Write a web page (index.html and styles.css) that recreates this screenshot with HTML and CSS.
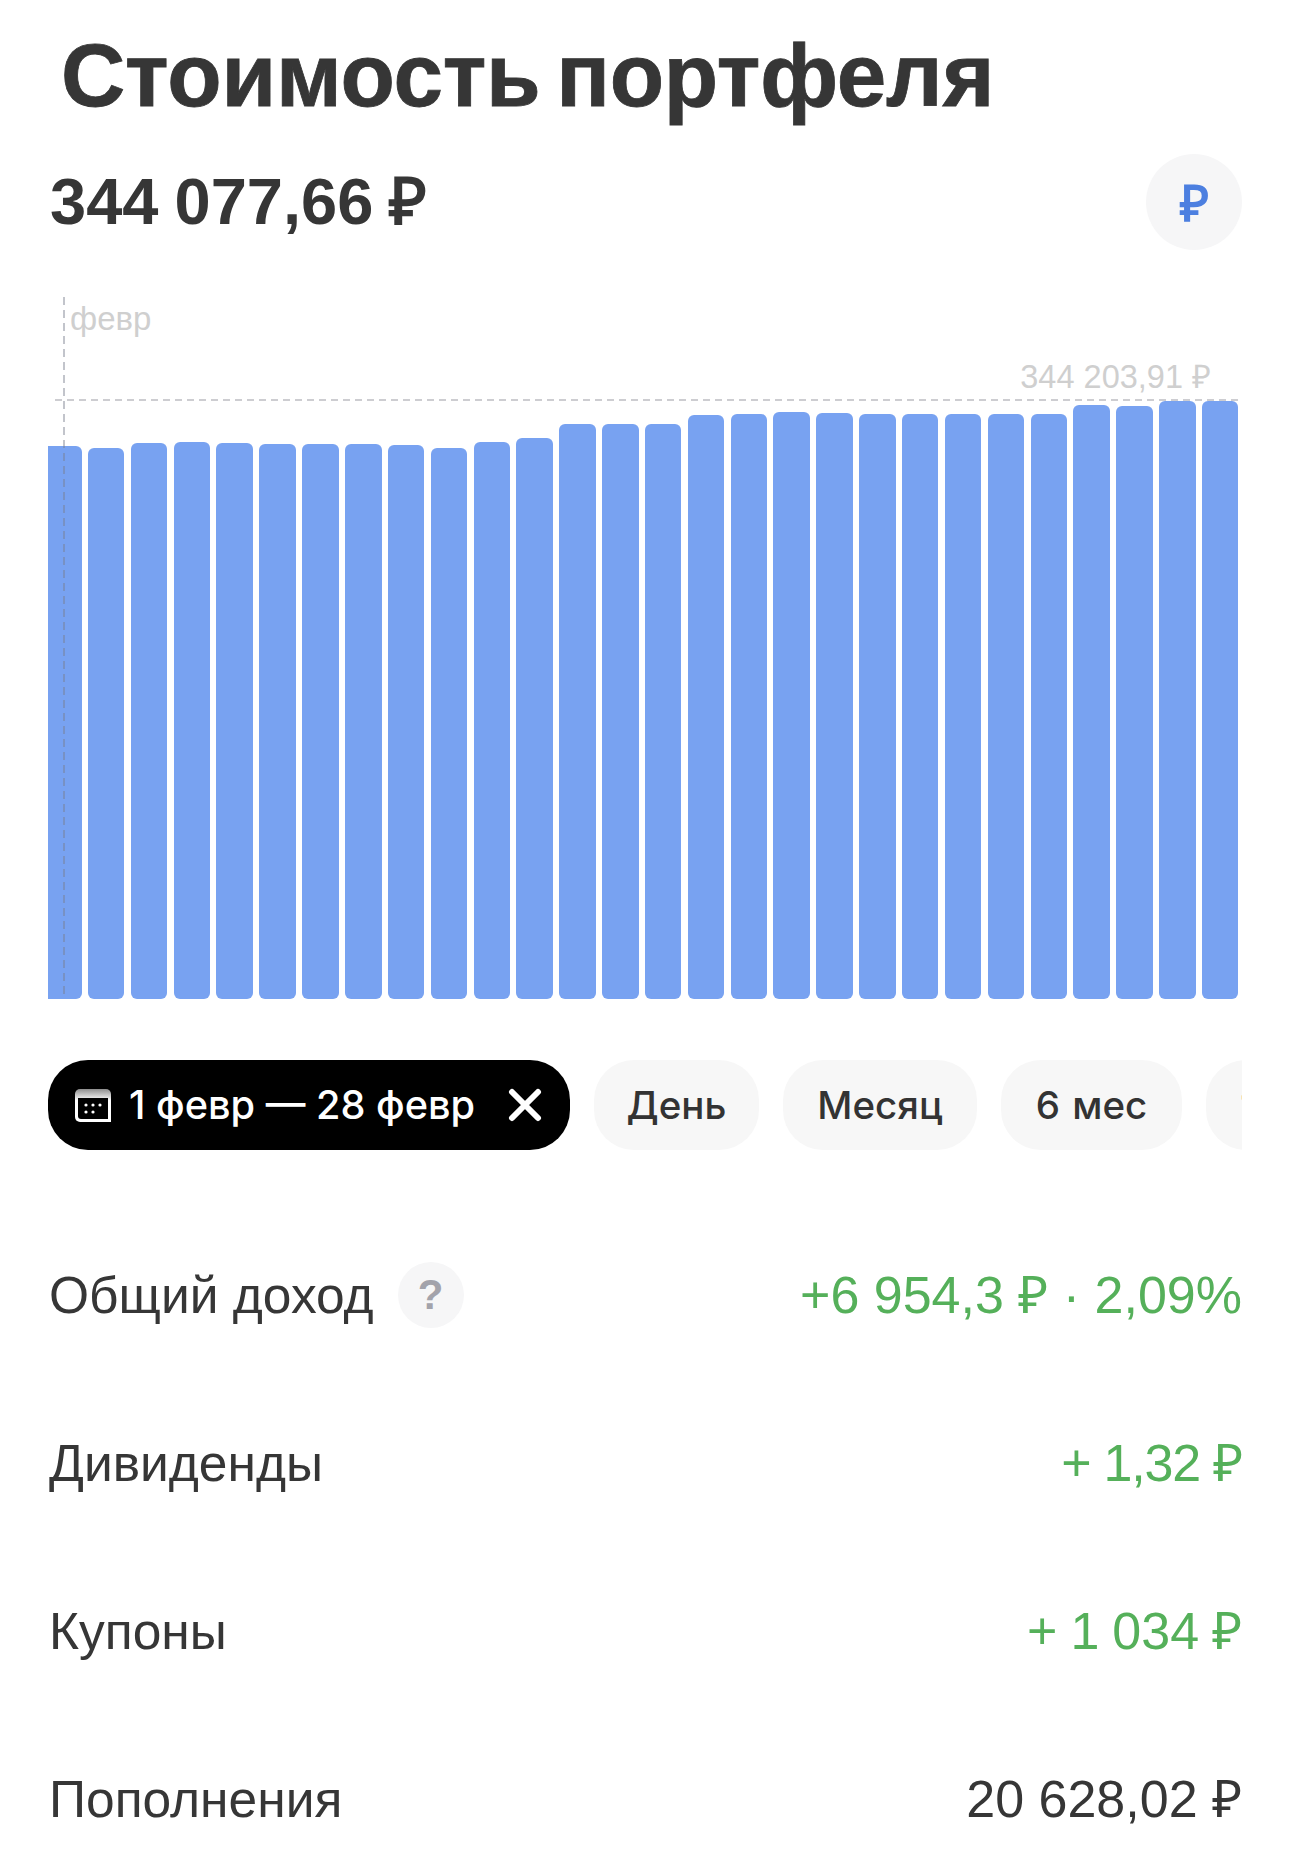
FILE: index.html
```html
<!DOCTYPE html>
<html lang="ru">
<head>
<meta charset="utf-8">
<title>Стоимость портфеля</title>
<link rel="stylesheet" href="styles.css">
</head>
<body>
<main class="page">
  <h1 class="title">Стоимость портфеля</h1>
  <div class="summary">
    <div class="amount">344 077,66 ₽</div>
    <button class="currency">₽</button>
  </div>
  <section class="chart">
    <span class="vline"></span>
    <span class="hline"></span>
    <span class="month">февр</span>
    <span class="maxval">344 203,91 ₽</span>
    <div class="bars">
      <i class="bar first" style="height:553px"></i>
      <i class="bar" style="height:551px"></i>
      <i class="bar" style="height:556px"></i>
      <i class="bar" style="height:557px"></i>
      <i class="bar" style="height:556px"></i>
      <i class="bar" style="height:555px"></i>
      <i class="bar" style="height:555px"></i>
      <i class="bar" style="height:555px"></i>
      <i class="bar" style="height:554px"></i>
      <i class="bar" style="height:551px"></i>
      <i class="bar" style="height:557px"></i>
      <i class="bar" style="height:561px"></i>
      <i class="bar" style="height:575px"></i>
      <i class="bar" style="height:575px"></i>
      <i class="bar" style="height:575px"></i>
      <i class="bar" style="height:584px"></i>
      <i class="bar" style="height:585px"></i>
      <i class="bar" style="height:587px"></i>
      <i class="bar" style="height:586px"></i>
      <i class="bar" style="height:585px"></i>
      <i class="bar" style="height:585px"></i>
      <i class="bar" style="height:585px"></i>
      <i class="bar" style="height:585px"></i>
      <i class="bar" style="height:585px"></i>
      <i class="bar" style="height:594px"></i>
      <i class="bar" style="height:593px"></i>
      <i class="bar" style="height:598px"></i>
      <i class="bar" style="height:598px"></i>
    </div>
  </section>
  <div class="filters">
    <div class="pill active">
      <svg class="cal" viewBox="0 0 38 36" aria-hidden="true">
        <defs><linearGradient id="calTop" x1="0" y1="0" x2="0" y2="1"><stop offset="0" stop-color="#8d8d8d"/><stop offset=".35" stop-color="#fff"/></linearGradient></defs>
        <path d="M1 7a5 5 0 0 1 5-5h26a5 5 0 0 1 5 5v28H6a5 5 0 0 1-5-5z" fill="url(#calTop)"/>
        <path d="M4 11h30v21H7a3 3 0 0 1-3-3z" fill="#000"/>
        <g fill="#fff"><circle cx="12" cy="18" r="1.6"/><circle cx="19" cy="18" r="1.6"/><circle cx="26" cy="18" r="1.6"/><circle cx="12" cy="25" r="1.6"/><circle cx="19" cy="25" r="1.6"/></g>
      </svg>
      <span class="pill-text">1 февр — 28 февр</span>
      <svg class="close" viewBox="0 0 34 34" aria-hidden="true"><path d="M4 4l26 26M30 4L4 30" stroke="#fff" stroke-width="6" stroke-linecap="round" fill="none"/></svg>
    </div>
    <div class="pill day">День</div>
    <div class="pill">Месяц</div>
    <div class="pill">6 мес</div>
    <div class="pill">1 год</div>
  </div>
  <dl class="rows">
    <div class="row">
      <dt class="label">Общий доход <span class="hint">?</span></dt>
      <dd class="value green">+6 954,3 ₽ · 2,09%</dd>
    </div>
    <div class="row">
      <dt class="label">Дивиденды</dt>
      <dd class="value green tight">+ 1,32 ₽</dd>
    </div>
    <div class="row">
      <dt class="label">Купоны</dt>
      <dd class="value green narrow">+ 1 034 ₽</dd>
    </div>
    <div class="row">
      <dt class="label">Пополнения</dt>
      <dd class="value">20 628,02 ₽</dd>
    </div>
  </dl>
</main>
</body>
</html>
```
FILE: styles.css
```css
* { box-sizing: border-box; }
html, body { margin: 0; padding: 0; background: #fff; }
body { height: 1876px; overflow: hidden; font-family: "Liberation Sans", Arial, sans-serif; color: #333; }
.page { padding: 19px 48px 0; width: 1290px; }
.title { margin: 0 0 0 13px; font-size: 89px; line-height: 112px; font-weight: 700; letter-spacing: -.2px; word-spacing: -9px; color: #363636; white-space: nowrap; -webkit-text-stroke: .8px #363636; }
.summary { display: flex; align-items: center; justify-content: space-between; margin-top: 23px; }
.amount { margin-left: 2px; font-size: 65px; line-height: 96px; font-weight: 700; word-spacing: -2px; color: #363636; }
.currency { width: 96px; height: 96px; border: 0; padding: 0; border-radius: 50%; background: #f6f6f7; color: #4c7fe0; font: 700 50px "Liberation Sans", sans-serif; }
.chart { position: relative; height: 702px; margin-top: 47px; }
.bars { position: absolute; left: 0; right: 0; bottom: 0; display: flex; align-items: flex-end; gap: 6.35px; }
.bar { display: block; flex: none; width: 36.5px; background: #78a2f1; border-radius: 6px; }
.bar.first { width: 33.6px; border-top-left-radius: 0; border-bottom-left-radius: 0; }
.vline { position: absolute; z-index: 2; left: 15px; top: 0; bottom: 0; width: 2px; background: repeating-linear-gradient(to bottom, rgba(120,125,140,.45) 0 8px, transparent 8px 13px); }
.hline { position: absolute; z-index: 2; left: 7px; right: 4px; top: 102px; height: 2px; background: repeating-linear-gradient(to right, rgba(130,130,140,.4) 0 7px, transparent 7px 12px); }
.month { position: absolute; left: 22px; top: 3px; font-size: 33px; line-height: 38px; color: #cfcfcf; }
.maxval { position: absolute; right: 31px; top: 62px; font-size: 32.5px; line-height: 36px; color: #cfcfcf; }
.filters { display: flex; gap: 24px; margin-top: 61px; width: 1194px; overflow: hidden; }
.pill { flex: none; display: flex; align-items: center; height: 90px; padding: 0 34.5px; border-radius: 40px; background: #f7f7f7; font: 500 38.5px "Inter", sans-serif; word-spacing: 2px; color: #333; }
.pill.day { padding: 0 32.5px; }
.pill.active { background: #000; color: #fff; padding: 0 28px 0 26px; width: 522px; font-size: 39.7px; word-spacing: 0; }
.pill-text { margin-left: 17px; white-space: nowrap; }
.cal { width: 38px; height: 36px; flex: none; }
.close { width: 34px; height: 34px; margin-left: auto; flex: none; }
.rows { margin: 115px 0 0; display: flex; flex-direction: column; gap: 108px; }
.row { display: flex; align-items: center; justify-content: space-between; height: 60px; }
.label { margin: 0 0 0 1px; display: flex; align-items: center; gap: 24px; font-size: 51.5px; line-height: 60px; color: #363636; }
.value { margin: 0; font-size: 52px; line-height: 60px; color: #363636; }
.value.green { color: #55b05a; }
.value.tight { letter-spacing: -1.2px; }
.value.narrow { word-spacing: -1.5px; }
.hint { width: 66px; height: 66px; border-radius: 50%; background: #f6f6f7; color: #a3a3ab; font-size: 42px; font-weight: 700; line-height: 66px; text-align: center; }
```
